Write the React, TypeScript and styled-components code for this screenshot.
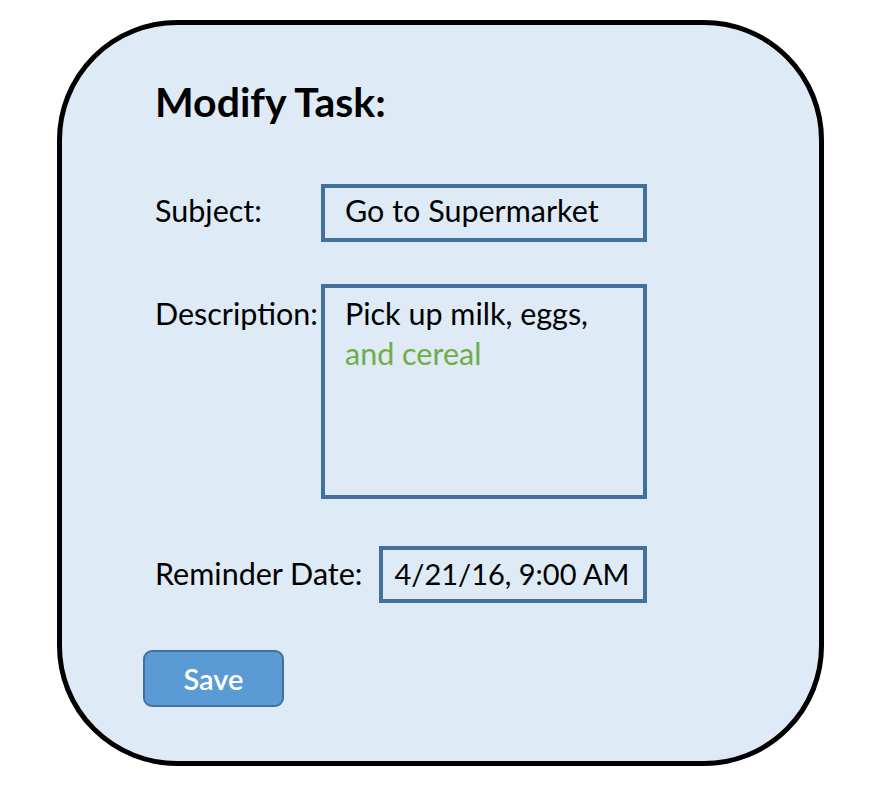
import React from "react";
import styled, { createGlobalStyle } from "styled-components";

const GlobalStyle = createGlobalStyle`
  html, body { margin: 0; padding: 0; background: #ffffff; }
  body { font-family: "Lato", "Noto Sans", sans-serif; color: #000; }
`;

const Page = styled.div`
  padding: 20px 0 0 57px;
`;

const Card = styled.div`
  box-sizing: border-box;
  width: 767px;
  height: 746px;
  border: 5px solid #000;
  border-radius: 120px;
  background: #deeaf6;
  padding: 53px 0 0 93px;
  display: flex;
  flex-direction: column;
`;

const Title = styled.h1`
  margin: 0 0 58px 0;
  font-size: 41px;
  line-height: 48px;
  font-weight: 700;
`;

const Row = styled.div<{ $gap: number }>`
  display: flex;
  align-items: flex-start;
  margin-bottom: ${(p) => p.$gap}px;
`;

const Label = styled.div<{ $width?: number; $top: number }>`
  width: ${(p) => (p.$width ? `${p.$width}px` : "auto")};
  margin-right: ${(p) => (p.$width ? 0 : 17)}px;
  padding-top: ${(p) => p.$top}px;
  font-size: 30.5px;
  line-height: 40px;
  white-space: nowrap;
`;

const Field = styled.div<{
  $width: number;
  $height: number;
  $top: number;
  $left: number;
  $size?: number;
}>`
  box-sizing: border-box;
  width: ${(p) => p.$width}px;
  height: ${(p) => p.$height}px;
  border: 4px solid #41719c;
  padding: ${(p) => p.$top}px 0 0 ${(p) => p.$left}px;
  font-size: ${(p) => p.$size ?? 30.5}px;
  line-height: 40px;
  white-space: nowrap;
`;

const Green = styled.span`
  color: #70ad47;
`;

const SaveButton = styled.button`
  box-sizing: border-box;
  margin-left: -12px;
  width: 141px;
  height: 57px;
  border: 2px solid #41719c;
  border-radius: 9px;
  background: #5b9bd5;
  color: #ffffff;
  font-family: "Lato", "Noto Sans", sans-serif;
  font-size: 29px;
  font-weight: 600;
  padding: 0;
  cursor: pointer;
`;

export default function App() {
  return (
    <>
      <GlobalStyle />
      <Page>
        <Card>
          <Title>Modify Task:</Title>
          <Row $gap={42}>
            <Label $width={166} $top={6}>Subject:</Label>
            <Field $width={326} $height={58} $top={2} $left={20}>
              Go to Supermarket
            </Field>
          </Row>
          <Row $gap={47}>
            <Label $width={166} $top={9}>Description:</Label>
            <Field $width={326} $height={215} $top={5} $left={20}>
              Pick up milk, eggs,
              <br />
              <Green>and cereal</Green>
            </Field>
          </Row>
          <Row $gap={47}>
            <Label $top={7}>Reminder Date:</Label>
            <Field $width={268} $height={57} $top={4} $left={11} $size={29}>
              4/21/16, 9:00 AM
            </Field>
          </Row>
          <div>
            <SaveButton>Save</SaveButton>
          </div>
        </Card>
      </Page>
    </>
  );
}
